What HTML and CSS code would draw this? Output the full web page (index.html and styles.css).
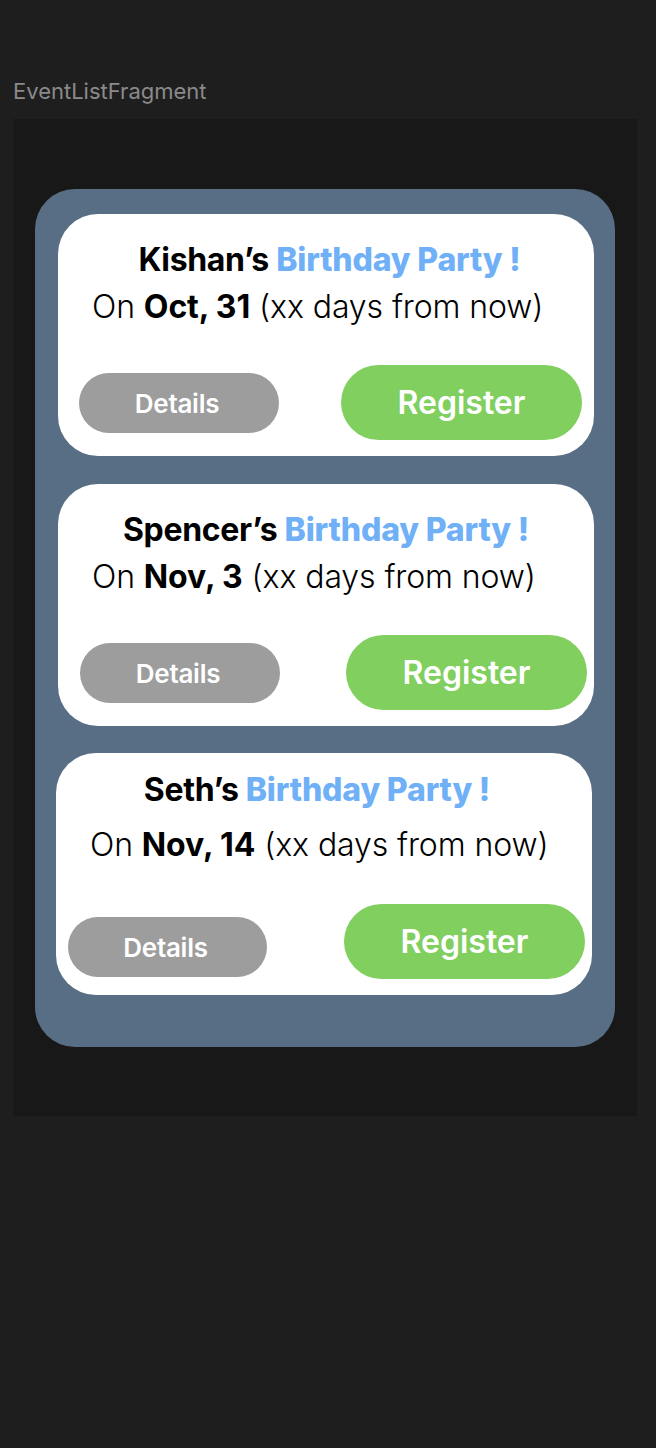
FILE: index.html
```html
<!DOCTYPE html>
<html lang="en">
<head>
<meta charset="utf-8">
<title>EventListFragment</title>
<link rel="stylesheet" href="styles.css">
</head>
<body>
<div class="label">EventListFragment</div>
<div class="frame">
  <div class="panel">
    <div class="card card-1">
      <div class="title">Kishan’s <span class="accent">Birthday Party !</span></div>
      <div class="date">On <b>Oct, 31</b> (xx days from now)</div>
      <div class="actions">
        <button class="btn details">Details</button>
        <button class="btn register">Register</button>
      </div>
    </div>
    <div class="card card-2">
      <div class="title">Spencer’s <span class="accent">Birthday Party !</span></div>
      <div class="date">On <b>Nov, 3</b> (xx days from now)</div>
      <div class="actions">
        <button class="btn details">Details</button>
        <button class="btn register">Register</button>
      </div>
    </div>
    <div class="card card-3">
      <div class="title">Seth’s <span class="accent">Birthday Party !</span></div>
      <div class="date">On <b>Nov, 14</b> (xx days from now)</div>
      <div class="actions">
        <button class="btn details">Details</button>
        <button class="btn register">Register</button>
      </div>
    </div>
  </div>
</div>
</body>
</html>
```

FILE: styles.css
```css
* { box-sizing: border-box; }

html, body {
  margin: 0;
  padding: 0;
  background: #1e1e1e;
  font-family: Inter, "Noto Sans", sans-serif;
}

body {
  width: 656px;
  height: 1448px;
  overflow: hidden;
}

.label {
  padding: 76px 0 0 13px;
  height: 119px;
  font-size: 22px;
  line-height: 30px;
  color: #8a8a8a;
}

.frame {
  margin-left: 13px;
  width: 624px;
  height: 997px;
  background: #181818;
  padding: 70px 0 0 22px;
}

.panel {
  width: 580px;
  height: 858px;
  background: #586e85;
  border-radius: 40px;
  padding-top: 25px;
  display: flex;
  flex-direction: column;
}

.card {
  width: 536px;
  height: 242px;
  background: #ffffff;
  border-radius: 40px;
  display: flex;
  flex-direction: column;
  margin-left: 23px;
}

.card-2 { margin-top: 28px; }
.card-3 { margin-top: 27px; margin-left: 21px; }

.title {
  font-size: 32px;
  line-height: 40px;
  font-weight: 700;
  color: #000;
  text-align: center;
  letter-spacing: -0.01em;
  margin-top: 26px;
  white-space: nowrap;
}

.card-1 .title { padding-left: 7px; }
.card-3 .title { margin-top: 17px; padding-right: 14px; }

.accent {
  color: #6fb0f7;
  font-weight: 800;
  letter-spacing: -0.005em;
}

.date {
  font-size: 32px;
  line-height: 40px;
  font-weight: 300;
  color: #000;
  padding-left: 34px;
  margin-top: 7px;
  white-space: nowrap;
  letter-spacing: -0.003em;
}

.date b { font-weight: 700; }

.card-3 .date { margin-top: 15px; padding-left: 34px; }

.actions {
  display: flex;
  align-items: flex-start;
  margin-top: 38px;
  height: 75px;
  padding-left: 21px;
  padding-right: 12px;
}

.card-2 .actions { padding-left: 22px; padding-right: 7px; }
.card-3 .actions { padding-left: 12px; padding-right: 7px; margin-top: 39px; }

.btn {
  border: none;
  color: #fff;
  font-family: Inter, "Noto Sans", sans-serif;
  font-weight: 600;
  border-radius: 999px;
  padding: 0;
  display: flex;
  align-items: center;
  justify-content: center;
}

.details {
  width: 200px;
  height: 60px;
  margin-top: 8px;
  padding-right: 4px;
  background: #9d9d9d;
  font-size: 26px;
  letter-spacing: -0.01em;
}

.card-3 .details { margin-top: 13px; width: 199px; }

.register {
  margin-left: auto;
  width: 241px;
  height: 75px;
  background: #80cf5f;
  font-size: 32px;
  letter-spacing: 0;
}
```
